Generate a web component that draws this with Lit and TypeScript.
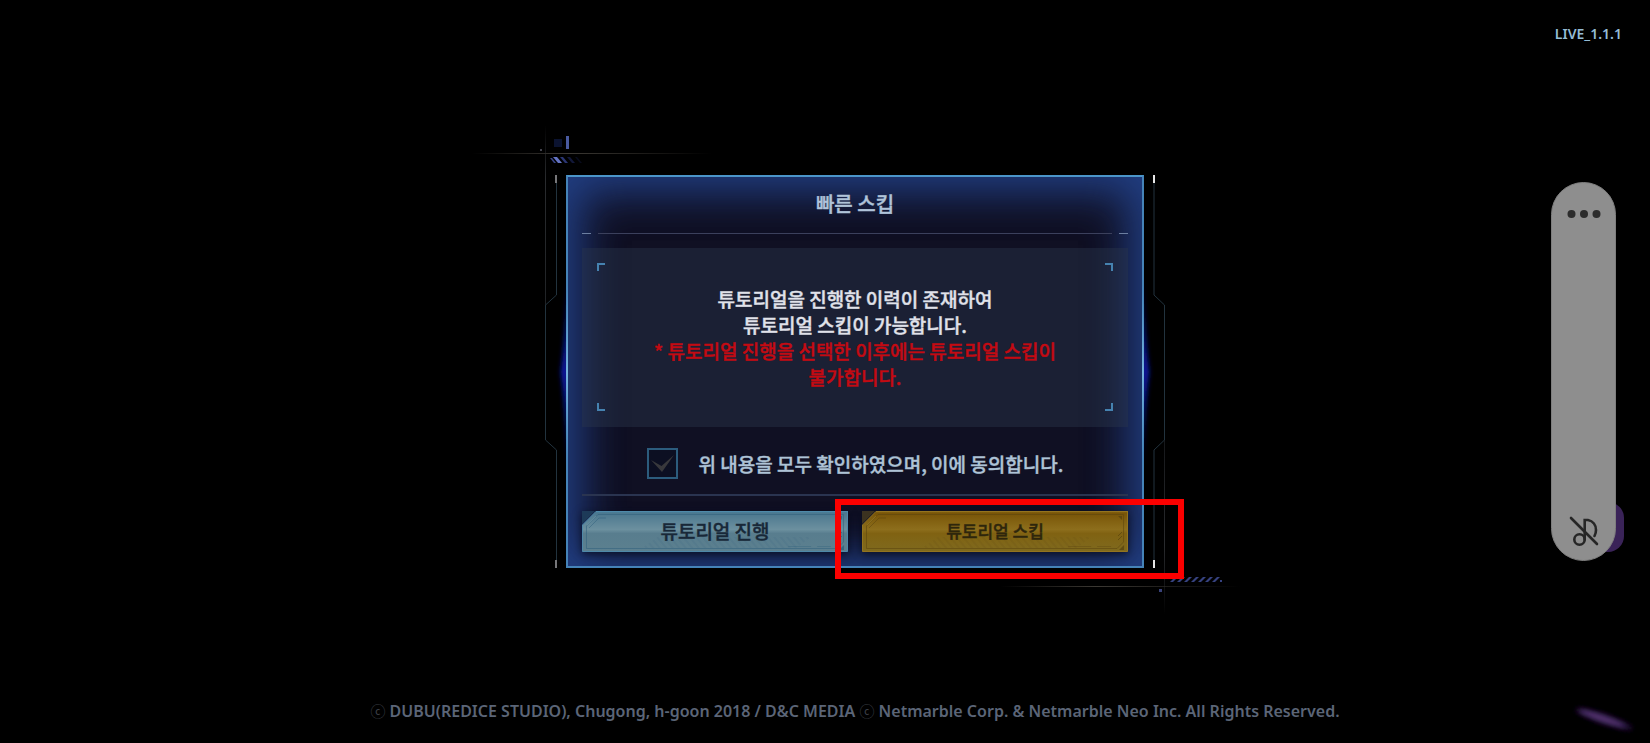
import { LitElement, html, css, svg } from "lit";
import { customElement, state, property } from "lit/decorators.js";

@customElement("skip-button")
class SkipButton extends LitElement {
  @property() label = "";
  @property() tone: "blue" | "gold" = "blue";

  static styles = css`
    :host {
      display: block;
    }
    .button {
      display: grid;
      place-items: center;
      width: 100%;
      height: 41px;
      padding: 0;
      border: 0;
      background: none;
      font-family: "Noto Sans CJK KR", "Noto Sans", sans-serif;
      font-weight: 500;
      line-height: 26px;
      cursor: pointer;
      box-shadow: 0 2px 8px rgba(6, 10, 26, 0.8);
    }
    .blue {
      color: #182838;
      font-size: 19px;
    }
    .gold {
      color: #2e260c;
      font-size: 17px;
    }
    .art,
    .label {
      grid-area: 1 / 1;
    }
    .art {
      display: block;
      width: 100%;
      height: 41px;
    }
    .label {
      -webkit-text-stroke: 0.4px currentColor;
      z-index: 1;
      padding-bottom: 2px;
    }
  `;

  render() {
    const gold = this.tone === "gold";
    const c = gold
      ? { corner: "#3b3220", edge: "#94741f", a: "#765205", b: "#8d6e1c", c: "#806212", d: "#7f6a1e", line: "#59430f", hi: "#9b7e2c" }
      : { corner: "#1d3a58", edge: "#4e8aaa", a: "#48758d", b: "#6c909f", c: "#587d8e", d: "#5c808f", line: "#2f5f7c", hi: "#7199aa" };
    return html`
      <button type="button" class="button ${this.tone}">
        <svg class="art" viewBox="0 0 267 41" preserveAspectRatio="none" aria-hidden="true">
          <defs>
            <linearGradient id="fill" x1="0" y1="0" x2="0" y2="1">
              <stop offset="0" stop-color=${c.a} />
              <stop offset=".45" stop-color=${c.b} />
              <stop offset=".55" stop-color=${c.c} />
              <stop offset="1" stop-color=${c.d} />
            </linearGradient>
            <pattern id="hatch" width="5" height="5" patternUnits="userSpaceOnUse" patternTransform="rotate(-40)">
              <rect width="2" height="5" fill=${c.line} opacity=".12" />
            </pattern>
          </defs>
          <path d="M0 0H13L0 13Z" fill=${c.corner} />
          <path d="M14 .5H266.500V40.500H.5V14Z" fill="url(#fill)" stroke=${c.edge} />
          <path d="M60 37L76 26H230L215 37Z" fill="url(#hatch)" />
          <path d="M14 .5H267" stroke=${c.edge} stroke-width="1.500" />
          <path d="M16 3.500H262.500V31L256 37.500H4.500V15Z" fill="none" stroke=${c.line} stroke-opacity=".55" />
          <path d="M7 17L17 7H24" fill="none" stroke=${c.line} stroke-opacity=".5" />
          <path d="M5 14L14 5" stroke=${c.hi} stroke-opacity=".6" />
          <path d="M257 5H261V9ZM263 34V39H258Z" fill=${c.line} opacity=".8" />
          <path d="M257 25L261 21M257 29L261 25" stroke=${c.line} stroke-opacity=".7" />
          <path d="M207 35.500H230M236 35.500H250" stroke=${c.line} stroke-opacity=".35" />
        </svg>
        <span class="label">${this.label}</span>
      </button>
    `;
  }
}

@customElement("app-root")
class AppRoot extends LitElement {
  @state() agreed = false;

  static styles = css`
    :host {
      display: grid;
      grid-template-columns: 193px 1fr 133px;
      grid-template-rows: 1fr auto 1fr;
      min-height: 100vh;
      box-sizing: border-box;
      background: #000;
      overflow: hidden;
      font-family: "Noto Sans CJK KR", "Noto Sans", sans-serif;
    }
    .version {
      grid-area: 1 / 3;
      justify-self: end;
      padding: 25px 28px 0 0;
      color: #94bcd6;
      font-family: "Noto Sans", sans-serif;
      font-size: 14px;
      font-weight: 600;
      line-height: 18px;
      white-space: nowrap;
    }
    .footer {
      grid-area: 3 / 1 / 4 / 4;
      align-self: end;
      padding: 0 0 20px 60px;
      color: #5b6577;
      font-family: "Noto Sans", sans-serif;
      font-size: 16px;
      font-weight: 600;
      line-height: 24px;
      text-align: center;
    }
    .mark {
      color: #3a3e45;
      font-family: "Noto Sans CJK KR", sans-serif;
      font-size: 15px;
      font-weight: 400;
      line-height: 20px;
    }
    .dialog {
      grid-area: 2 / 2;
      justify-self: center;
      position: relative;
      box-sizing: border-box;
      width: 578px;
      max-width: 100%;
      border: 2px solid #4583b8;
      border-top-color: #4b95c9;
      padding: 0 14px 14px;
      background: #101023;
      box-shadow:
        inset 0 0 44px 12px rgba(36, 70, 146, 0.8),
        inset 0 4px 50px 4px rgba(36, 70, 146, 0.35);
      display: flex;
      flex-direction: column;
    }
    .ornament {
      position: absolute;
      top: -2px;
      left: -2px;
      width: 578px;
      height: 393px;
      overflow: visible;
      pointer-events: none;
    }
    .title {
      margin: 0;
      padding: 13px 0 15px;
      color: #b0c4da;
      font-size: 20px;
      font-weight: 500;
      line-height: 28px;
      text-align: center;
    }
    .strong {
      -webkit-text-stroke: 0.4px currentColor;
    }
    .rule {
      display: grid;
      grid-template-columns: 9px 1fr 9px;
      gap: 7px;
      height: 1px;
    }
    .rule-part {
      background: #3b405c;
    }
    .rule-end {
      background: #6c7ea0;
    }
    .notice {
      position: relative;
      display: flex;
      flex-direction: column;
      justify-content: center;
      margin-top: 14px;
      padding: 38px 60px 37px;
      background: rgba(42, 54, 76, 0.42);
      color: #e0e2ea;
      font-size: 19px;
      font-weight: 500;
      line-height: 26px;
      text-align: center;
    }
    .text {
      margin: 0;
    }
    .warning {
      color: #c40a12;
    }
    .corner {
      position: absolute;
      width: 6px;
      height: 6px;
      border: 0 solid #4582b0;
    }
    .tl { top: 15px; left: 15px; border-width: 2px 0 0 2px; }
    .tr { top: 15px; right: 15px; border-width: 2px 2px 0 0; }
    .bl { bottom: 16px; left: 15px; border-width: 0 0 2px 2px; }
    .br { bottom: 16px; right: 15px; border-width: 0 2px 2px 0; }
    .agree {
      display: flex;
      align-items: center;
      justify-content: center;
      gap: 21px;
      padding: 21px 0 15px;
      color: #aec3d6;
      font-size: 19px;
      font-weight: 500;
      line-height: 26px;
    }
    .tick {
      display: grid;
      width: 31px;
      height: 31px;
    }
    .box,
    .check {
      grid-area: 1 / 1;
    }
    .box {
      appearance: none;
      box-sizing: border-box;
      width: 31px;
      height: 31px;
      margin: 0;
      border: 2px solid #2c5c7d;
      background: #0c0f22;
    }
    .check {
      z-index: 1;
      width: 31px;
      height: 31px;
      fill: #38383c;
      pointer-events: none;
    }
    .box:checked + .check {
      fill: #79c4f0;
    }
    .line {
      height: 2px;
      background: #2a3450;
    }
    .actions {
      display: grid;
      grid-template-columns: 1fr 1fr;
      gap: 14px;
      margin-top: 15px;
    }
    .highlight {
      position: absolute;
      right: -42px;
      bottom: -13px;
      box-sizing: border-box;
      width: 349px;
      height: 80px;
      border: 6px solid #fb0000;
      pointer-events: none;
    }
    .assist {
      grid-area: 1 / 3 / 4 / 4;
      align-self: center;
      justify-self: center;
      position: relative;
      width: 65px;
      height: 51vh;
      min-height: 200px;
    }
    .bubble {
      position: absolute;
      right: -8px;
      bottom: 9px;
      width: 40px;
      height: 50px;
      border-radius: 16px;
      background: #3a2358;
    }
    .pill {
      position: relative;
      box-sizing: border-box;
      height: 100%;
      padding: 21px 0 12px;
      border: 1px solid #7e7e7e;
      border-radius: 33px;
      background: #8e8e8e;
      display: flex;
      flex-direction: column;
      align-items: center;
      justify-content: space-between;
    }
    .tool {
      display: block;
      padding: 0;
      border: 0;
      background: none;
      cursor: pointer;
    }
    .glyph {
      display: block;
    }
    .smudge {
      grid-area: 3 / 3;
      align-self: end;
      justify-self: end;
      margin: 0 10px 4px 0;
    }
  `;

  private ornament() {
    const ticks = [-11, 587];
    return html`
      <svg class="ornament" viewBox="0 0 578 393" aria-hidden="true">
        <defs>
          <linearGradient id="fade">
            <stop offset="0" stop-color="#3c3833" stop-opacity="0" />
            <stop offset=".4" stop-color="#3c3934" />
            <stop offset="1" stop-color="#3c3833" stop-opacity="0" />
          </linearGradient>
          <linearGradient id="drop" x1="0" y1="0" x2="0" y2="1">
            <stop offset="0" stop-color="#303236" stop-opacity="0" />
            <stop offset=".3" stop-color="#292b2e" />
            <stop offset="1" stop-color="#202326" />
          </linearGradient>
          <linearGradient id="rise" x1="0" y1="1" x2="0" y2="0">
            <stop offset="0" stop-color="#303236" stop-opacity="0" />
            <stop offset=".4" stop-color="#292b2e" />
            <stop offset="1" stop-color="#16181b" />
          </linearGradient>
          <linearGradient id="beam" x1="0" y1="0" x2="0" y2="1">
            <stop offset="0" stop-color="#6fb6e8" stop-opacity="0" />
            <stop offset=".5" stop-color="#74b2dc" />
            <stop offset="1" stop-color="#6fb6e8" stop-opacity="0" />
          </linearGradient>
          <filter id="soft" x="-200%" width="500%"><feGaussianBlur stdDeviation="2.500" /></filter>
          <clipPath id="outside"><path d="M-40 0H0V393H-40ZM578 0H620V393H578Z" /></clipPath>
        </defs>
        <g clip-path="url(#outside)">
          <path d="M2 100Q0 162 -5 197Q0 232 2 293ZM576 100Q578 162 583 197Q578 232 576 293Z" fill="#0a1ab0" filter="url(#soft)" />
        </g>
        <path d="M1 110Q-1 197 1 284L2 284V110ZM577 110Q579 197 577 284L576 284V110Z" fill="url(#beam)" />
        <rect x="-94" y="-22" width="240" height="1" fill="url(#fade)" />
        <rect x="434" y="411" width="240" height="1" fill="url(#fade)" />
        <rect x="-21" y="-50" width="1" height="180" fill="url(#drop)" />
        <rect x="598" y="264" width="1" height="176" fill="url(#rise)" />
        <g fill="none" stroke="#22333e">
          <path d="M-9.500 7V120L-20.500 130V265L-9.500 275V385" />
          <path d="M588 7V120L598.500 130V265L588 275V385" />
        </g>
        ${ticks.map((x) => svg`
          <rect x=${x} y="0" width="2" height="8" fill=${x < 0 ? "#77777a" : "#e6e6e6"} />
          <rect x=${x} y="385" width="2" height="8" fill=${x < 0 ? "#77777a" : "#e6e6e6"} />`)}
        <rect x="-26" y="-26" width="2" height="2" fill="#44444e" />
        <rect x="-12" y="-36" width="8" height="8" fill="#0b1330" />
        <rect x="0" y="-39" width="3" height="13" fill="#4a5ba0" />
        <path d="M-16 -17H-14L-10 -12H-12Z" fill="#39458a" />
        <path d="M-13 -18H-9L-4 -12H-8Z" fill="#6474c4" />
        <path d="M-6 -18H-3L2 -12H-1Z" fill="#2b3675" />
        <path d="M1 -18H4L9 -12H6Z" fill="#12183a" />
        <path d="M9 -18H11L16 -12H14Z" fill="#080b1c" />
        <rect x="593" y="414" width="3" height="3" fill="#39427a" />
        ${[604, 611, 618, 625, 632, 639, 646].map((x) => svg`
          <path d="M${x} 407L${x + 5} 402H${x + 8}L${x + 3} 407Z" fill="#364280" />`)}
        <rect x="654" y="405" width="2" height="2" fill="#364280" />
      </svg>
    `;
  }

  render() {
    return html`
      <div class="version">LIVE_1.1.1</div>

      <section class="dialog" role="dialog" aria-labelledby="title">
        ${this.ornament()}
        <h1 class="title strong" id="title">빠른 스킵</h1>
        <div class="rule">
          <span class="rule-end"></span><span class="rule-part"></span><span class="rule-end"></span>
        </div>
        <div class="notice">
          <p class="text strong">튜토리얼을 진행한 이력이 존재하여<br />튜토리얼 스킵이 가능합니다.</p>
          <p class="text warning strong">* 튜토리얼 진행을 선택한 이후에는 튜토리얼 스킵이<br />불가합니다.</p>
          <span class="corner tl"></span><span class="corner tr"></span>
          <span class="corner bl"></span><span class="corner br"></span>
        </div>
        <label class="agree" for="agree">
          <span class="tick">
            <input class="box" id="agree" type="checkbox" .checked=${this.agreed}
              @change=${(e: Event) => (this.agreed = (e.target as HTMLInputElement).checked)} />
            <svg class="check" viewBox="0 0 31 31" aria-hidden="true">
              <path d="M4 12L14.500 18L27 7L15 24Z" />
            </svg>
          </span>
          <span class="strong">위 내용을 모두 확인하였으며, 이에 동의합니다.</span>
        </label>
        <div class="line"></div>
        <div class="actions">
          <skip-button tone="blue" label="튜토리얼 진행"></skip-button>
          <skip-button tone="gold" label="튜토리얼 스킵"></skip-button>
        </div>
        <div class="highlight"></div>
      </section>

      <aside class="assist">
        <div class="bubble"></div>
        <div class="pill">
          <button class="tool" type="button" aria-label="More">
            <svg class="glyph" width="36" height="20" viewBox="0 0 36 20" fill="#2c2c2c">
              <circle cx="5.500" cy="10" r="4" /><circle cx="18" cy="10" r="4" /><circle cx="30.500" cy="10" r="4" />
            </svg>
          </button>
          <button class="tool" type="button" aria-label="Mute">
            <svg class="glyph" width="32" height="34" viewBox="0 0 32 34" fill="none" stroke="#262626" stroke-width="2.600" stroke-linecap="round">
              <path d="M3 4L29 30" />
              <circle cx="11.500" cy="25.500" r="5.200" />
              <path d="M16.700 25.500V6H20C25 7 28 11 28 16C28 18 27.500 20 26.500 22" />
            </svg>
          </button>
        </div>
      </aside>

      <svg class="smudge" width="72" height="40" viewBox="0 0 72 40" aria-hidden="true">
        <defs>
          <filter id="haze" x="-30%" y="-200%" width="160%" height="500%"><feGaussianBlur stdDeviation="2.500" /></filter>
        </defs>
        <g transform="rotate(19 36 20)">
          <ellipse cx="36" cy="20" rx="30" ry="5" fill="#22103a" filter="url(#haze)" />
          <ellipse cx="34" cy="20" rx="24" ry="2.500" fill="#5e3c7a" filter="url(#haze)" />
        </g>
      </svg>

      <footer class="footer">
        <span class="mark">ⓒ</span> DUBU(REDICE STUDIO), Chugong, h-goon 2018 / D&amp;C MEDIA
        <span class="mark">ⓒ</span> Netmarble Corp. &amp; Netmarble Neo Inc. All Rights Reserved.
      </footer>
    `;
  }
}
